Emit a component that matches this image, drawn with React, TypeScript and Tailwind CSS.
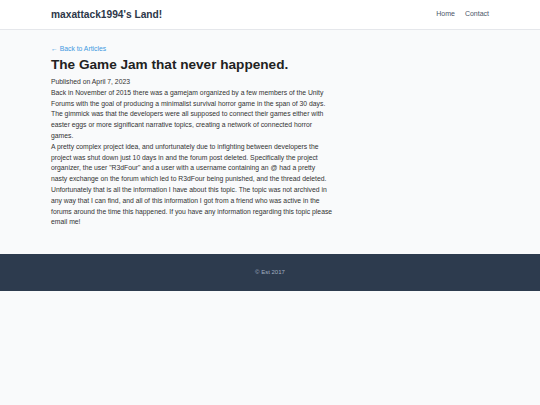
export default function App() {
  return (
    <div className="min-h-[405px] bg-[#f9fafb] font-['Liberation_Sans',Arial,sans-serif] text-[#333]">
      <header className="h-[30px] bg-white border-b border-[#e5e7eb]">
        <div className="mx-auto w-[438px] h-full flex items-center justify-between">
          <a className="text-[10.2px] font-bold text-[#2d3748]">maxattack1994's Land!</a>
          <nav className="flex gap-[10px] text-[7px] text-[#4a5568]">
            <a>Home</a>
            <a>Contact</a>
          </nav>
        </div>
      </header>

      <main className="mx-auto w-[438px] pt-[14px] pb-[26px]">
        <a className="block text-[6.8px] text-[#4299e1] leading-[10px]">← Back to Articles</a>
        <h1 className="mt-[1px] text-[13.6px] font-bold text-[#222] leading-[20px]">The Game Jam that never happened.</h1>
        <p className="mt-[2px] text-[6.8px] leading-[10.8px]">Published on April 7, 2023</p>
        <div className="w-[282px] text-[6.8px] leading-[10.8px]">
          <p>
            Back in November of 2015 there was a gamejam organized by a few members of the Unity Forums with the goal
            of producing a minimalist survival horror game in the span of 30 days. The gimmick was that the developers
            were all supposed to connect their games either with easter eggs or more significant narrative topics,
            creating a network of connected horror games.
          </p>
          <p>
            A pretty complex project idea, and unfortunately due to infighting between developers the project was shut
            down just 10 days in and the forum post deleted. Specifically the project organizer, the user "R3dFour" and
            a user with a username containing an @ had a pretty nasty exchange on the forum which led to R3dFour being
            punished, and the thread deleted. Unfortunately that is all the information I have about this topic. The
            topic was not archived in any way that I can find, and all of this information I got from a friend who
            was active in the forums around the time this happened. If you have any information regarding this topic
            please email me!
          </p>
        </div>
      </main>

      <footer className="h-[37px] bg-[#2d3b4e] flex items-center justify-center">
        <span className="text-[6px] text-[#a0aec0]">© Est 2017</span>
      </footer>
    </div>
  )
}
